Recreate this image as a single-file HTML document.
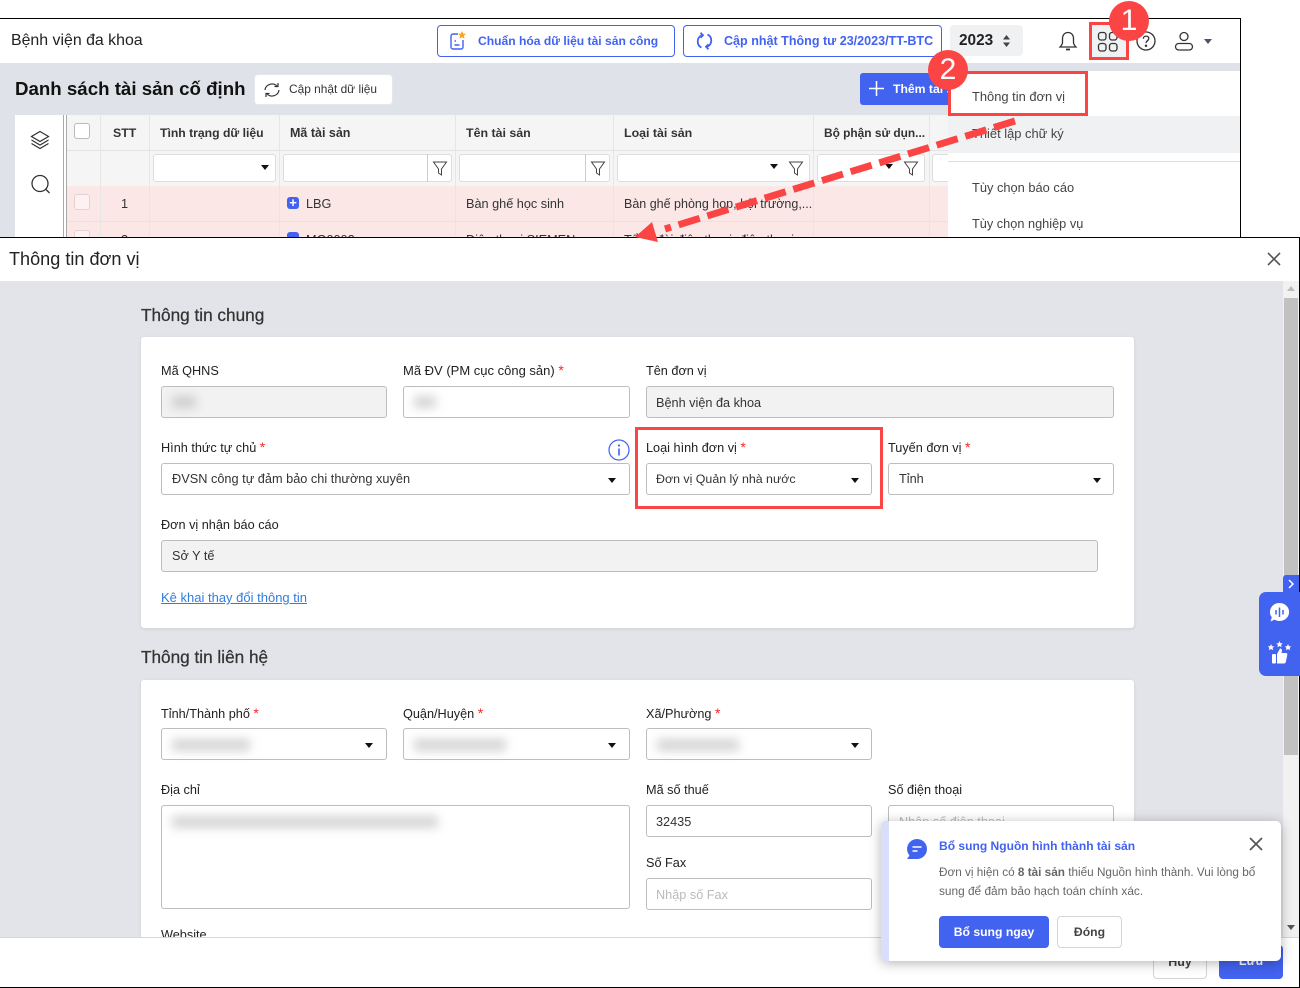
<!DOCTYPE html>
<html lang="vi"><head><meta charset="utf-8"><title>Thông tin đơn vị</title>
<style>
*{box-sizing:border-box}
html,body{margin:0;padding:0;background:#fff}
body{width:1300px;height:988px;position:relative;overflow:hidden;font-family:"Liberation Sans","Noto Sans CJK SC",sans-serif;font-size:13px;color:#212121}
.a{position:absolute}
.t{position:absolute;white-space:nowrap;line-height:16px;height:16px}
.b{font-weight:bold}
.i{position:absolute;border:1px solid #bdbdbd;border-radius:3px;background:#fff}
.d{background:#f2f2f2}
.l{font-size:12.7px;color:#212121}
.s{color:#f22;font-size:14px}
.v{font-size:12.7px;color:#333}
.c{position:absolute;width:0;height:0;border-left:4px solid transparent;border-right:4px solid transparent;border-top:5px solid #111}
.bl{position:absolute;background:#aaa;filter:blur(5px);height:12px;opacity:.5}
.th{font-size:12.3px;font-weight:bold;color:#333}
.vl{position:absolute;width:1px;background:#e6e6e6}
.h2{font-size:17.2px;color:#333;-webkit-text-stroke:.25px #333}
svg{position:absolute;overflow:visible}
.rb{position:absolute;border:3px solid #fb4545}
.ci{position:absolute;width:40px;height:40px;border-radius:50%;background:#fb4545;color:#fff;text-align:center;font-size:30px;line-height:40px}
</style></head><body>

<!-- background app -->
<div class="a" style="left:0;top:18px;width:1241px;height:220px;border-top:1px solid #000;border-right:1px solid #000;background:#dfe2e8;overflow:hidden">
<div class="a" style="left:0;top:0;width:1241px;height:44px;background:#fff"></div>
</div>
<div class="t" style="left:11px;top:33px;font-size:15.9px;color:#222">Bệnh viện đa khoa</div>

<div class="a" style="left:437px;top:25px;width:238px;height:32px;border:1px solid #4262f0;border-radius:4px;background:#fff"></div>
<svg style="left:449px;top:30px" width="20" height="22" viewBox="0 0 20 22" fill="none"><path d="M9 4H4a2 2 0 0 0-2 2v11a2 2 0 0 0 2 2h8a2 2 0 0 0 2-2v-7" stroke="#4262f0" stroke-width="1.4"/><path d="M5.500 11h1.500M5.500 15h5" stroke="#4262f0" stroke-width="1.4"/><path d="M13 1l1.200 2.600 2.800.3-2.100 1.900.6 2.800-2.500-1.400-2.500 1.400.6-2.800-2.100-1.900 2.800-.3z" fill="#f6a623"/></svg>
<div class="t b" style="left:478px;top:33px;font-size:12.1px;color:#4262f0">Chuẩn hóa dữ liệu tài sản công</div>

<div class="a" style="left:683px;top:25px;width:259px;height:32px;border:1px solid #4262f0;border-radius:4px;background:#fff"></div>
<svg style="left:696px;top:32px" width="17" height="18" viewBox="0 0 17 18" fill="none" stroke="#4262f0" stroke-width="1.800"><path d="M6 3.200A6.800 6.800 0 0 0 5.500 15.600"/><path d="M11 14.800A6.800 6.800 0 0 0 11.500 2.400"/><path d="M4.500 .8L7 3.300 4.500 5.800M12.500 12.200L10 14.700l2.500 2.500"/></svg>
<div class="t b" style="left:724px;top:33px;font-size:12.55px;color:#4262f0">Cập nhật Thông tư 23/2023/TT-BTC</div>

<div class="a" style="left:950px;top:25px;width:73px;height:31px;background:#f0f1f3;border-radius:4px"></div>
<div class="t b" style="left:959px;top:33px;font-size:15.4px;color:#222">2023</div>
<svg style="left:1002px;top:34px" width="9" height="14" viewBox="0 0 9 14" fill="#444"><path d="M4.500 1L8 5.500H1zM4.500 13L1 8.500h7z"/></svg>

<svg style="left:1058px;top:30px" width="20" height="22" viewBox="0 0 20 22" fill="none" stroke="#333" stroke-width="1.300"><path d="M10 2.500c-3.500 0-5.500 2.700-5.500 6v4c0 2-1.200 3-2.500 4.500h16c-1.300-1.500-2.500-2.500-2.500-4.500v-4c0-3.300-2-6-5.500-6z"/><path d="M8 19.500h4" stroke-width="1.800"/></svg>

<div class="a" style="left:1089px;top:22px;width:40px;height:38px;background:#f0f1f3"></div>
<svg style="left:1097px;top:31px" width="22" height="22" viewBox="0 0 22 22" fill="none" stroke="#333" stroke-width="1.300"><rect x="1.500" y="1.500" width="7.500" height="7.500" rx="2.500"/><rect x="12.500" y="1.500" width="7.500" height="7.500" rx="2.500"/><rect x="1.500" y="12.500" width="7.500" height="7.500" rx="2.500"/><rect x="12.500" y="12.500" width="7.500" height="7.500" rx="2.500"/></svg>

<svg style="left:1136px;top:31px" width="20" height="20" viewBox="0 0 20 20" fill="none" stroke="#333" stroke-width="1.300"><circle cx="10" cy="10" r="9"/><path d="M7.300 7.800c0-1.700 1.200-2.700 2.800-2.700s2.700 1 2.700 2.400c0 2.200-2.800 2.200-2.800 4.600"/><circle cx="10" cy="14.800" r=".6" fill="#333"/></svg>

<svg style="left:1174px;top:31px" width="20" height="20" viewBox="0 0 20 20" fill="none" stroke="#333" stroke-width="1.300"><circle cx="10" cy="5.500" r="4"/><rect x="1.500" y="12.500" width="17" height="6.500" rx="3.200"/></svg>
<div class="a" style="left:1204px;top:39px;width:0;height:0;border-left:4px solid transparent;border-right:4px solid transparent;border-top:5px solid #4a5568"></div>

<!-- toolbar -->
<div class="t b" style="left:15px;top:78px;font-size:18.700px;line-height:22px;height:22px;color:#111">Danh sách tài sản cố định</div>
<div class="a" style="left:254px;top:74px;width:139px;height:31px;background:#fff;border:1px solid #e5e7eb;border-radius:4px"></div>
<svg style="left:263px;top:82px" width="18" height="16" viewBox="0 0 18 16" fill="none" stroke="#333" stroke-width="1.200"><path d="M2 8a7 6.500 0 0 1 12-4"/><path d="M16 8a7 6.500 0 0 1-12 4"/><path d="M11.500 4.500H15V1M6.500 11.500H3V15"/></svg>
<div class="t" style="left:289px;top:81px;font-size:11.900px;color:#333">Cập nhật dữ liệu</div>
<div class="a" style="left:860px;top:73px;width:100px;height:32px;background:#4262f0;border-radius:3px"></div>
<svg style="left:869px;top:81px" width="15" height="15" viewBox="0 0 15 15" stroke="#fff" stroke-width="1.500"><path d="M7.500 0v15M0 7.500h15"/></svg>
<div class="t b" style="left:893px;top:81px;font-size:12.2px;color:#fff;width:55px;overflow:hidden">Thêm tài sản</div>

<!-- table -->
<div class="a" style="left:15px;top:115px;width:48px;height:122px;background:#fff"></div>
<div class="a" style="left:63px;top:115px;width:4px;height:122px;background:#fff;border-left:1px solid #aaa;border-right:1px solid #aaa"></div>
<svg style="left:30px;top:130px" width="20" height="21" viewBox="0 0 20 21" fill="none" stroke="#333" stroke-width="1.200"><path d="M10 1.500l8.500 5-8.500 5-8.500-5z"/><path d="M1.500 10l8.500 5 8.500-5M1.500 13.500l8.500 5 8.500-5"/></svg>
<svg style="left:30px;top:174px" width="21" height="21" viewBox="0 0 21 21" fill="none" stroke="#333" stroke-width="1.300"><circle cx="10" cy="9.500" r="8"/><path d="M16 15.500l3.500 3.500"/></svg>

<div class="a" style="left:67px;top:115px;width:881px;height:35px;background:#f5f5f5"></div>
<div class="a" style="left:67px;top:150px;width:881px;height:36px;background:#f5f5f5;border-top:1px solid #e3e3e3"></div>
<div class="a" style="left:67px;top:186px;width:881px;height:51px;background:#fce7e7"></div>
<div class="a" style="left:67px;top:221px;width:881px;height:1px;background:#f6dcdc"></div>
<div class="vl" style="left:100px;top:115px;height:122px"></div>
<div class="vl" style="left:149px;top:115px;height:122px"></div>
<div class="vl" style="left:279px;top:115px;height:122px"></div>
<div class="vl" style="left:455px;top:115px;height:122px"></div>
<div class="vl" style="left:613px;top:115px;height:122px"></div>
<div class="vl" style="left:813px;top:115px;height:122px"></div>
<div class="vl" style="left:929px;top:115px;height:122px"></div>

<div class="a" style="left:74px;top:123px;width:16px;height:16px;border:1px solid #bbb;border-radius:3px;background:#fff"></div>
<div class="t th" style="left:113px;top:125px">STT</div>
<div class="t th" style="left:160px;top:125px;font-size:12.200px">Tình trạng dữ liệu</div>
<div class="t th" style="left:290px;top:125px;font-size:12.500px">Mã tài sản</div>
<div class="t th" style="left:466px;top:125px;font-size:12.400px">Tên tài sản</div>
<div class="t th" style="left:624px;top:125px;font-size:12.400px">Loại tài sản</div>
<div class="t th" style="left:824px;top:125px;font-size:11.900px">Bộ phận sử dụn...</div>

<div class="i" style="left:153px;top:154px;width:123px;height:28px;border-color:#ddd"></div>
<div class="c" style="left:261px;top:165px"></div>
<div class="i" style="left:283px;top:154px;width:169px;height:28px;border-color:#ddd"></div>
<div class="vl" style="left:427px;top:154px;height:28px;background:#ccc"></div>
<div class="i" style="left:459px;top:154px;width:151px;height:28px;border-color:#ddd"></div>
<div class="vl" style="left:585px;top:154px;height:28px;background:#ccc"></div>
<div class="i" style="left:617px;top:154px;width:193px;height:28px;border-color:#ddd"></div>
<div class="c" style="left:770px;top:164px"></div>
<div class="i" style="left:817px;top:154px;width:108px;height:28px;border-color:#ddd"></div>
<div class="c" style="left:885px;top:164px"></div>
<div class="i" style="left:932px;top:154px;width:30px;height:28px;border-color:#ddd"></div>
<svg style="left:433px;top:161px" width="14" height="15" viewBox="0 0 14 15" fill="none" stroke="#444" stroke-width="1"><path d="M.5 1h13L8.500 8v6l-3-2V8z"/></svg>
<svg style="left:591px;top:161px" width="14" height="15" viewBox="0 0 14 15" fill="none" stroke="#444" stroke-width="1"><path d="M.5 1h13L8.500 8v6l-3-2V8z"/></svg>
<svg style="left:789px;top:161px" width="14" height="15" viewBox="0 0 14 15" fill="none" stroke="#444" stroke-width="1"><path d="M.5 1h13L8.500 8v6l-3-2V8z"/></svg>
<svg style="left:904px;top:161px" width="14" height="15" viewBox="0 0 14 15" fill="none" stroke="#444" stroke-width="1"><path d="M.5 1h13L8.500 8v6l-3-2V8z"/></svg>

<div class="a" style="left:74px;top:194px;width:16px;height:16px;border:1px solid #e5d2d2;border-radius:3px;background:#fdf1f1"></div>
<div class="t v" style="left:121px;top:196px">1</div>
<div class="a" style="left:287px;top:197px;width:12px;height:12px;border-radius:3px;background:#4262f0;color:#fff;text-align:center;font-size:13px;line-height:12px;font-weight:bold">+</div>
<div class="t v" style="left:306px;top:196px">LBG</div>
<div class="t v" style="left:466px;top:196px">Bàn ghế học sinh</div>
<div class="t v" style="left:624px;top:196px;width:189px;overflow:hidden;font-size:12.500px">Bàn ghế phòng họp, hội trường,...</div>
<div class="a" style="left:74px;top:230px;width:16px;height:16px;border:1px solid #e5d2d2;border-radius:3px;background:#fdf1f1"></div>
<div class="t v" style="left:121px;top:232px">2</div>
<div class="a" style="left:287px;top:232px;width:12px;height:12px;border-radius:3px;background:#4262f0"></div>
<div class="t v" style="left:306px;top:232px">MG0002</div>
<div class="t v" style="left:466px;top:232px">Điện thoại SIEMEN</div>
<div class="t v" style="left:624px;top:232px">Tổng đài điện thoại, điện thoại</div>

<!-- dropdown -->
<div class="a" style="left:948px;top:71px;width:292px;height:167px;background:#fff"></div>
<div class="a" style="left:948px;top:116px;width:292px;height:37px;background:#f0f1f3"></div>
<div class="a" style="left:948px;top:161px;width:292px;height:1px;background:#ddd"></div>
<div class="t v" style="left:972px;top:89px;color:#444;font-size:12.900px">Thông tin đơn vị</div>
<div class="t v" style="left:972px;top:126px;color:#444;font-size:12.900px">Thiết lập chữ ký</div>
<div class="t v" style="left:972px;top:180px;color:#444;font-size:12.850px">Tùy chọn báo cáo</div>
<div class="t v" style="left:972px;top:216px;color:#444;font-size:12.750px">Tùy chọn nghiệp vụ</div>
<div class="a" style="left:1240px;top:18px;width:1px;height:220px;background:#000"></div>

<!-- modal -->
<div class="a" style="left:0;top:237px;width:1300px;height:751px;border-top:1px solid #000;border-right:1px solid #000;border-bottom:1px solid #000;background:#e2e4e9"></div>
<div class="a" style="left:0;top:238px;width:1299px;height:43px;background:#fff"></div>
<div class="t" style="left:9px;top:250px;font-size:18.100px;line-height:18px;height:18px;color:#222">Thông tin đơn vị</div>
<svg style="left:1267px;top:252px" width="14" height="14" viewBox="0 0 14 14" stroke="#555" stroke-width="1.600"><path d="M1 1l12 12M13 1L1 13"/></svg>

<div class="a" style="left:1283px;top:281px;width:16px;height:656px;background:#f1f1f1"></div>
<div class="a" style="left:1284px;top:298px;width:14px;height:457px;background:#c1c1c1"></div>
<div class="a" style="left:1287px;top:286px;border-left:4px solid transparent;border-right:4px solid transparent;border-bottom:5px solid #bbb"></div>
<div class="a" style="left:1287px;top:925px;border-left:4px solid transparent;border-right:4px solid transparent;border-top:5px solid #555"></div>

<div class="t h2" style="left:141px;top:307px">Thông tin chung</div>
<div class="a" style="left:141px;top:337px;width:993px;height:291px;background:#fff;border-radius:3px;box-shadow:0 1px 3px rgba(0,0,0,.1)"></div>

<div class="t l" style="left:161px;top:363px">Mã QHNS</div>
<div class="i d" style="left:161px;top:386px;width:226px;height:32px"></div>
<div class="bl" style="left:172px;top:396px;width:24px"></div>
<div class="t l" style="left:403px;top:362px;font-size:13px">Mã ĐV (PM cục công sản) <span class="s">*</span></div>
<div class="i" style="left:403px;top:386px;width:227px;height:32px"></div>
<div class="bl" style="left:414px;top:396px;width:22px"></div>
<div class="t l" style="left:646px;top:363px">Tên đơn vị</div>
<div class="i d" style="left:646px;top:386px;width:468px;height:32px"></div>
<div class="t v" style="left:656px;top:395px">Bệnh viện đa khoa</div>

<div class="t l" style="left:161px;top:439px">Hình thức tự chủ <span class="s">*</span></div>
<svg style="left:608px;top:439px" width="22" height="22" viewBox="0 0 22 22" fill="none"><circle cx="11" cy="11" r="10" stroke="#4262f0" stroke-width="1.200"/><path d="M11 9.500v7" stroke="#4262f0" stroke-width="1.600"/><circle cx="11" cy="6.500" r="1.100" fill="#4262f0"/></svg>
<div class="i" style="left:161px;top:463px;width:469px;height:32px"></div>
<div class="t v" style="left:172px;top:471px;font-size:12.750px">ĐVSN công tự đảm bảo chi thường xuyên</div>
<div class="c" style="left:608px;top:478px"></div>
<div class="t l" style="left:646px;top:439px">Loại hình đơn vị <span class="s">*</span></div>
<div class="i" style="left:646px;top:463px;width:226px;height:32px"></div>
<div class="t v" style="left:656px;top:471px;font-size:12.400px">Đơn vị Quản lý nhà nước</div>
<div class="c" style="left:851px;top:478px"></div>
<div class="t l" style="left:888px;top:439px">Tuyến đơn vị <span class="s">*</span></div>
<div class="i" style="left:888px;top:463px;width:226px;height:32px"></div>
<div class="t v" style="left:899px;top:471px">Tỉnh</div>
<div class="c" style="left:1093px;top:478px"></div>

<div class="t l" style="left:161px;top:517px">Đơn vị nhận báo cáo</div>
<div class="i d" style="left:161px;top:540px;width:937px;height:32px"></div>
<div class="t v" style="left:172px;top:548px">Sở Y tế</div>
<div class="t" style="left:161px;top:590px;font-size:13px;color:#2f7de1;text-decoration:underline">Kê khai thay đổi thông tin</div>

<div class="t h2" style="left:141px;top:649px">Thông tin liên hệ</div>
<div class="a" style="left:141px;top:680px;width:993px;height:257px;background:#fff;border-radius:3px 3px 0 0;box-shadow:0 1px 3px rgba(0,0,0,.1)"></div>

<div class="t l" style="left:161px;top:705px">Tỉnh/Thành phố <span class="s">*</span></div>
<div class="i" style="left:161px;top:728px;width:226px;height:32px"></div>
<div class="bl" style="left:172px;top:739px;width:78px"></div>
<div class="c" style="left:365px;top:743px"></div>
<div class="t l" style="left:403px;top:705px">Quận/Huyện <span class="s">*</span></div>
<div class="i" style="left:403px;top:728px;width:227px;height:32px"></div>
<div class="bl" style="left:414px;top:739px;width:92px"></div>
<div class="c" style="left:608px;top:743px"></div>
<div class="t l" style="left:646px;top:705px">Xã/Phường <span class="s">*</span></div>
<div class="i" style="left:646px;top:728px;width:226px;height:32px"></div>
<div class="bl" style="left:657px;top:739px;width:82px"></div>
<div class="c" style="left:851px;top:743px"></div>

<div class="t l" style="left:161px;top:782px">Địa chỉ</div>
<div class="i" style="left:161px;top:805px;width:469px;height:104px"></div>
<div class="bl" style="left:172px;top:816px;width:266px"></div>
<div class="t l" style="left:646px;top:782px">Mã số thuế</div>
<div class="i" style="left:646px;top:805px;width:226px;height:32px"></div>
<div class="t v" style="left:656px;top:814px">32435</div>
<div class="t l" style="left:888px;top:782px">Số điện thoại</div>
<div class="i" style="left:888px;top:805px;width:226px;height:32px"></div>
<div class="t v" style="left:899px;top:814px;color:#bbb">Nhập số điện thoại</div>
<div class="t l" style="left:646px;top:855px">Số Fax</div>
<div class="i" style="left:646px;top:878px;width:226px;height:32px"></div>
<div class="t v" style="left:656px;top:887px;color:#bbb">Nhập số Fax</div>
<div class="t l" style="left:161px;top:927px">Website</div>

<!-- footer -->
<div class="a" style="left:0;top:937px;width:1299px;height:50px;background:#fff;border-top:1px solid #d8d8d8"></div>
<div class="a" style="left:1153px;top:945px;width:54px;height:34px;border:1px solid #d5d5d5;border-radius:4px;background:#fff;text-align:center;line-height:32px;font-size:12.5px;font-weight:bold;color:#444">Hủy</div>
<div class="a" style="left:1219px;top:945px;width:64px;height:34px;border-radius:4px;background:#4262f0;text-align:center;line-height:32px;font-size:12.5px;font-weight:bold;color:#fff">Lưu</div>

<!-- side widget -->
<div class="a" style="left:1283px;top:575px;width:16px;height:17px;background:#4262f0;border-radius:3px 0 0 0"></div>
<svg style="left:1287px;top:579px" width="8" height="10" viewBox="0 0 8 10" fill="none" stroke="#fff" stroke-width="1.500"><path d="M2 1l4 4-4 4"/></svg>
<div class="a" style="left:1259px;top:592px;width:41px;height:84px;background:#4262f0;border-radius:7px 0 0 7px"></div>
<svg style="left:1269px;top:602px" width="21" height="21" viewBox="0 0 21 21"><path d="M10.500 1a9.500 9 0 1 1-5 16.600L1.500 19.500l1.300-4.200A9.500 9 0 0 1 10.500 1z" fill="#fff"/><path d="M7 8v4.500M10.500 5.500v9.500M14 8v4.500" stroke="#4262f0" stroke-width="1.500"/></svg>
<svg style="left:1267px;top:641px" width="25" height="24" viewBox="0 0 25 24" fill="#fff"><path d="M12.500 0l1 2.200 2.300.2-1.700 1.500.5 2.300-2.100-1.200-2.100 1.200.5-2.300-1.700-1.500 2.300-.2z"/><path d="M4 3l1 2.200 2.300.2-1.700 1.500.5 2.300L4 8l-2.100 1.200.5-2.300L.7 5.400 3 5.200z"/><path d="M21 3l1 2.200 2.300.2-1.700 1.500.5 2.300L21 8l-2.100 1.200.5-2.300-1.700-1.500 2.300-.2z"/><rect x="5" y="13" width="4" height="9.500" rx="1"/><path d="M10 13l3-5.500c1.300 0 2 .9 2 2L14.500 12H19c1 0 1.500.8 1.300 1.700l-1.400 7c-.2 1-.8 1.800-1.900 1.800h-7z"/></svg>

<!-- popup -->
<div class="a" style="left:881px;top:821px;width:400px;height:140px;background:#fff;border-radius:5px;box-shadow:0 2px 12px rgba(0,0,0,.3);border-left:8px solid #d9dffb"></div>
<svg style="left:907px;top:839px" width="20" height="20" viewBox="0 0 20 20"><path d="M10 0a10 10 0 1 1 0 20H0l2.500-3.400A10 10 0 0 1 10 0z" fill="#4262f0"/><path d="M5.500 8h9M5.500 12h5" stroke="#fff" stroke-width="1.600"/></svg>
<div class="t b" style="left:939px;top:838px;font-size:12.05px;color:#4262f0">Bổ sung Nguồn hình thành tài sản</div>
<svg style="left:1249px;top:837px" width="14" height="14" viewBox="0 0 14 14" stroke="#555" stroke-width="1.700"><path d="M1 1l12 12M13 1L1 13"/></svg>
<div class="t" style="left:939px;top:865px;font-size:11.75px;color:#666">Đơn vị hiện có <b>8 tài sản</b> thiếu Nguồn hình thành. Vui lòng bổ</div>
<div class="t" style="left:939px;top:883px;font-size:11.85px;color:#666">sung để đảm bảo hạch toán chính xác.</div>
<div class="a b" style="left:939px;top:916px;width:110px;height:32px;background:#4262f0;border-radius:4px;color:#fff;text-align:center;line-height:32px;font-size:12.2px">Bổ sung ngay</div>
<div class="a b" style="left:1057px;top:916px;width:65px;height:32px;border:1px solid #d5d5d5;border-radius:4px;background:#fff;color:#444;text-align:center;line-height:30px;font-size:12.2px">Đóng</div>

<!-- annotations -->
<div class="rb" style="left:1089px;top:22px;width:40px;height:38px"></div>
<div class="rb" style="left:948px;top:71px;width:140px;height:45px"></div>
<div class="rb" style="left:635px;top:427px;width:248px;height:82px"></div>
<svg style="left:0;top:0" width="1300" height="300" viewBox="0 0 1300 300"><path d="M1015 121L665 229" stroke="#fb4545" stroke-width="7" stroke-dasharray="22 8" fill="none"/><path d="M635 237L652 222 658 242z" fill="#fb4545"/></svg>
<div class="ci" style="left:1109px;top:1px">1</div>
<div class="ci" style="left:928px;top:50px">2</div>
</body></html>
